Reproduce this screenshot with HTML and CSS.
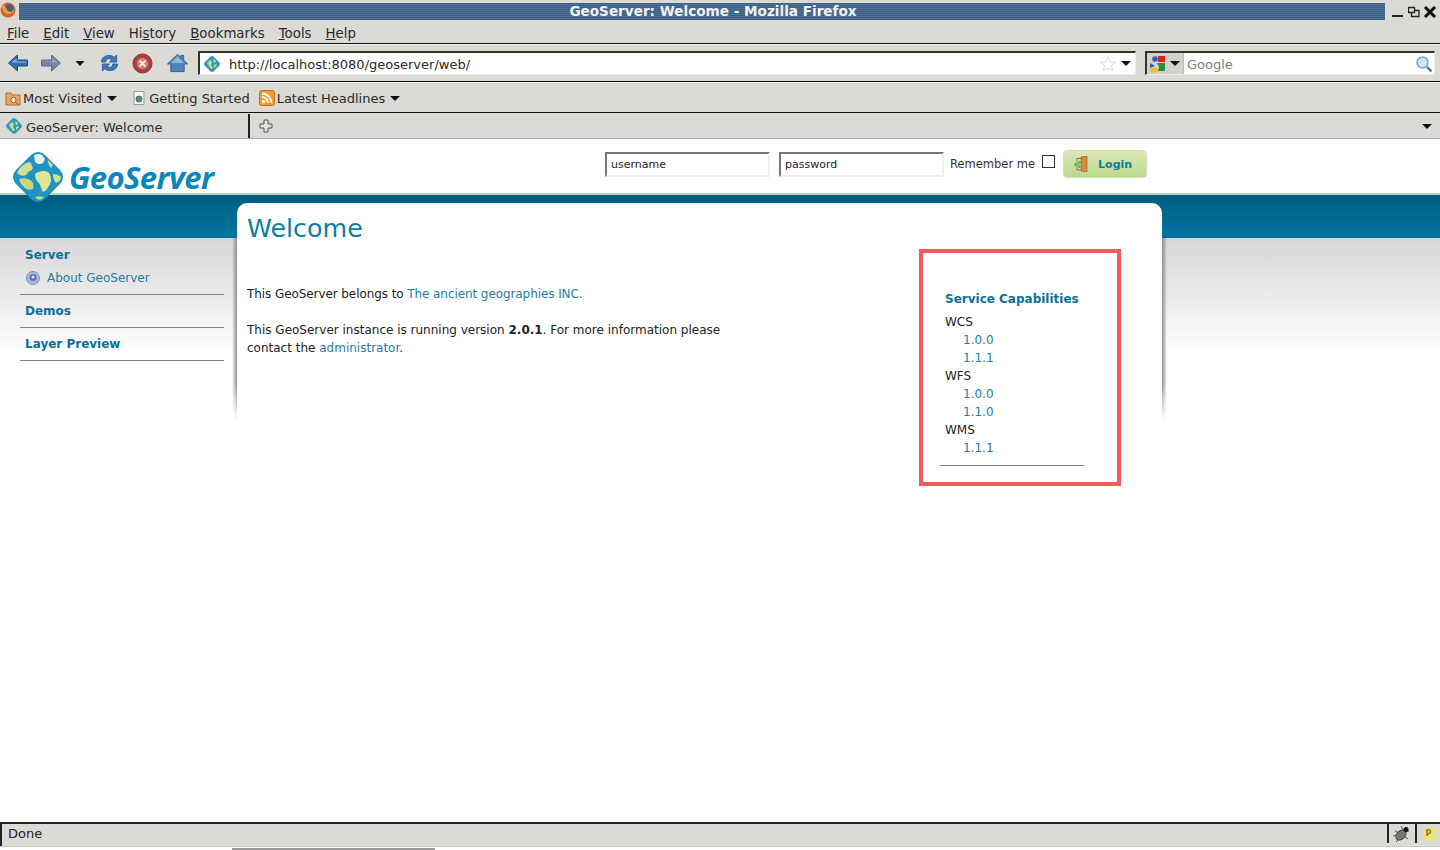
FILE: index.html
```html
<!DOCTYPE html>
<html lang="en">
<head>
<meta charset="utf-8">
<title>GeoServer: Welcome - Mozilla Firefox</title>
<link rel="stylesheet" href="styles.css">
</head>
<body>
<div class="browser">
  <div class="titlebar">
    <svg class="ff-icon" width="16" height="18" viewBox="0 0 16 18"><circle cx="8" cy="9" r="7.5" fill="#d9611f"/><circle cx="9" cy="7.5" r="4.2" fill="#3f5f96"/><path d="M2 4c0 6 3 10 8 9 3-.5 4-2 4.500-4-1 1.500-3 2-5 1.500C7 10 6 8.500 6.500 7 5 6.500 4 5 4 3z" fill="#f0a030"/></svg>
    <div class="titlebar-strip">GeoServer: Welcome - Mozilla Firefox</div>
    <div class="wm-buttons">
      <svg width="14" height="14" viewBox="0 0 14 14"><rect x="1" y="10" width="11" height="2" fill="#222"/></svg>
      <svg width="12" height="14" viewBox="0 0 12 14"><path d="M.5 2.500h6v5h-6z M3.500 7.500v4h7.500v-6H6.500" fill="none" stroke="#222" stroke-width="1.300"/></svg>
      <svg width="14" height="14" viewBox="0 0 14 14"><path d="M2 2l10 10M12 2L2 12" stroke="#111" stroke-width="3"/></svg>
    </div>
  </div>

  <nav class="menubar">
    <span class="menu-item"><u>F</u>ile</span>
    <span class="menu-item"><u>E</u>dit</span>
    <span class="menu-item"><u>V</u>iew</span>
    <span class="menu-item">Hi<u>s</u>tory</span>
    <span class="menu-item"><u>B</u>ookmarks</span>
    <span class="menu-item"><u>T</u>ools</span>
    <span class="menu-item"><u>H</u>elp</span>
  </nav>

  <div class="navbar">
    <div class="nav-buttons">
      <svg width="20" height="20" viewBox="0 0 20 20"><path d="M.5 10l9-8v5h10v6h-10v5z" fill="#2f6fb0" stroke="#1d4f85"/><path d="M3.500 9.500l5-4v3h10v1z" fill="#8fb8df"/></svg>
      <svg width="20" height="20" viewBox="0 0 20 20"><path d="M19.500 10l-9-8v5H.5v6h10v5z" fill="#75859f" stroke="#5f6f8a"/><path d="M1.500 8.500h10v-3l5 4z" fill="#a5b2c5"/></svg>
      <svg width="10" height="20" viewBox="0 0 10 20"><path d="M.5 8h9l-4.500 5z" fill="#111"/></svg>
      <svg width="19" height="20" viewBox="0 0 20 20"><path d="M1.500 9c0-4.500 3.500-7 8.500-7 2 0 4 1 5 2l2.500-2.500V9h-7.500l2.500-2.500C9.500 4.500 6 5.500 6 9z" fill="#3d78b8" stroke="#24558c" stroke-width=".8"/><path d="M18.500 11c0 4.500-3.500 7-8.500 7-2 0-4-1-5-2l-2.500 2.500V11h7.500l-2.500 2.500c2.500 2 6 1 6-2.500z" fill="#3d78b8" stroke="#24558c" stroke-width=".8"/></svg>
      <svg width="21" height="21" viewBox="0 0 22 22"><circle cx="11" cy="11" r="10" fill="#a93f3c" stroke="#8e3330"/><circle cx="11" cy="11" r="6" fill="#d07e79"/><path d="M8 8l6 6M14 8l-6 6" stroke="#f3f0ee" stroke-width="2"/></svg>
      <svg width="21" height="20" viewBox="0 0 22 20"><path d="M11 1L.5 11h3.500v8h14v-8h3.500l-4-4V2h-3v2z" fill="#4a85c0" stroke="#2f628f"/><path d="M11 3L4 10h14z" fill="#8db6dc"/></svg>
    </div>
    <div class="urlbar">
      <svg class="fav" width="16" height="16" viewBox="0 0 16 16"><path d="M8 0q1 0 2 1l5 5q2 2 0 4l-5 5q-2 2-4 0l-5-5q-2-2 0-4l5-5q1-1 2-1z" fill="#2f9bc4"/><path d="M3 7l3-3 2 2-1 3 2 3-2 1zM9 3l2 1 1 2-2 1zM10 9l2-1 1 1-3 3z" fill="#c9dc8c"/></svg>
      <span class="url-text">http://localhost:8080/geoserver/web/</span>
      <svg class="star" width="16" height="16" viewBox="0 0 18 18"><path d="M9 1l2.400 5.400 5.800.6-4.300 3.900 1.200 5.700L9 13.800l-5.100 2.800 1.200-5.700L.8 7l5.800-.6z" fill="#fff" stroke="#d5d5d0"/></svg>
      <i class="caret"></i>
    </div>
    <div class="searchbar">
      <div class="engine">
        <svg width="18" height="18" viewBox="0 0 18 18"><circle cx="6" cy="4" r="2.800" fill="#2a62b8"/><path d="M1 8l5 3-5 2z" fill="#2a62b8"/><ellipse cx="5" cy="15" rx="4" ry="2.600" fill="#f0bd2c"/><path d="M9 1h7v6H9z" fill="#d4261c"/><path d="M8 8h8v8H9l1-4z" fill="#2f8f3a"/></svg>
        <i class="caret"></i>
      </div>
      <span class="search-hint">Google</span>
      <svg class="magnifier" width="18" height="18" viewBox="0 0 18 18"><circle cx="7.500" cy="7.500" r="5.500" fill="#cfe3f5" stroke="#7fa6cf" stroke-width="1.500"/><path d="M12 12l4.500 4.500" stroke="#777" stroke-width="2.500"/></svg>
    </div>
  </div>

  <div class="bookmarks">
    <span class="bookmark bm-folder">
      <svg width="16" height="16" viewBox="0 0 16 16"><path d="M1 3h5l1 2h8v10H1z" fill="#e9a868" stroke="#b66a24"/><circle cx="8.500" cy="10" r="2.700" fill="#f8e7d0" stroke="#8a5a2a"/><path d="M10.500 12l2.500 2.500" stroke="#8a5a2a"/></svg>
      Most Visited <i class="caret"></i>
    </span>
    <span class="bookmark bm-page">
      <svg width="14" height="16" viewBox="0 0 14 16"><path d="M2 1.500h10v13H2z" fill="#f4f4f2" stroke="#999"/><circle cx="7" cy="9" r="3" fill="#5c8f85" stroke="#3e6a62"/></svg>
      Getting Started
    </span>
    <span class="bookmark">
      <svg width="16" height="16" viewBox="0 0 16 16"><rect x=".5" y=".5" width="15" height="15" rx="2" fill="#f49a2c" stroke="#c06f10"/><circle cx="4.500" cy="11.500" r="1.700" fill="#fff"/><path d="M3 7a6 6 0 0 1 6 6M3 3.500A9.500 9.500 0 0 1 12.500 13" fill="none" stroke="#fff" stroke-width="1.800"/></svg>
      Latest Headlines <i class="caret"></i>
    </span>
  </div>

  <div class="tabbar">
    <div class="tab">
      <svg width="16" height="16" viewBox="0 0 16 16"><path d="M8 0q1 0 2 1l5 5q2 2 0 4l-5 5q-2 2-4 0l-5-5q-2-2 0-4l5-5q1-1 2-1z" fill="#2f9bc4"/><path d="M3 7l3-3 2 2-1 3 2 3-2 1zM9 3l2 1 1 2-2 1zM10 9l2-1 1 1-3 3z" fill="#c9dc8c"/></svg>
      <span class="tab-label">GeoServer: Welcome</span>
    </div>
    <svg class="newtab" width="14" height="14" viewBox="0 0 14 14"><path d="M5 1h4v4h4v4H9v4H5V9H1V5h4z" fill="#e4e2de" stroke="#555"/></svg>
    <i class="caret tab-caret"></i>
  </div>

  <main class="page">
    <header class="page-head">
      <a class="logo">
        <svg class="logo-globe" width="52" height="52" viewBox="0 0 52 52"><path d="M26 1q4 0 7 3l15 15q6 7 0 14L33 48q-7 6-14 0L4 33q-6-7 0-14L19 4q3-3 7-3z" fill="#1f93c4"/><path d="M22 4q4-2 8 0l3 4-2 4c-3 2-6 1-8-1z" fill="#eaf2e4"/><path d="M5 22c2-5 6-9 12-11 3 1 3 4 4 6-1 3-5 3-6 6-3 3-6 2-10-1z" fill="#d2e08f"/><path d="M7 28c4-1 8-1 11 1 4 2 4 6 3 9-3 1-6 1-8-1-3-2-5-5-6-9z" fill="#c5d97c"/><path d="M23 23c4-3 9-4 13-2 3 3 4 8 2 12-2 4-4 7-7 8-2-3-2-6-4-9-3-2-4-6-4-9z" fill="#dbe69b"/><path d="M41 23c3 0 6 1 8 3 0 3-2 5-5 6-2-2-3-5-3-9z" fill="#d2e08f"/><path d="M23 46c3-1 6-1 9 0-2 3-6 4-9 0z" fill="#c5d97c"/><path d="M36 9l5 5-2 3c-2-2-3-5-3-8z" fill="#d2e08f"/></svg>
        <span class="logo-text">GeoServer</span>
      </a>
      <form class="login">
        <input class="field" type="text" value="username">
        <input class="field" type="text" value="password">
        <span class="remember">Remember me</span>
        <span class="check"></span>
        <span class="login-btn">
          <svg width="16" height="16" viewBox="0 0 16 16"><path d="M7 1l6-1v16l-6-1z" fill="#d98a3a" stroke="#99602a" stroke-width=".7"/><path d="M7 2.500H3v3M3 11v3h4" fill="none" stroke="#777"/><path d="M1 7h4V5l3.500 3.500L5 12v-2H1z" fill="#9bc36a" stroke="#5f8a3a" stroke-width=".7"/></svg>
          Login
        </span>
      </form>
    </header>

    <div class="layout">
      <aside class="sidebar">
        <section class="side-group">
          <h3 class="side-title">Server</h3>
          <a class="side-link">
            <svg width="14" height="14" viewBox="0 0 14 14"><circle cx="7" cy="7" r="6.500" fill="#a9b9dc" stroke="#7f92bd"/><circle cx="7" cy="6.500" r="3.500" fill="#5c75a8"/><circle cx="7" cy="6" r="1.500" fill="#e6ebf5"/></svg>
            About GeoServer
          </a>
        </section>
        <section class="side-group"><h3 class="side-title">Demos</h3></section>
        <section class="side-group"><h3 class="side-title">Layer Preview</h3></section>
      </aside>

      <article class="card">
        <div class="card-main">
          <h1 class="welcome">Welcome</h1>
          <p class="para">This GeoServer belongs to <a class="lnk">The ancient geographies INC.</a></p>
          <p class="para">This GeoServer instance is running version <b>2.0.1</b>. For more information please contact the <a class="lnk">administrator</a>.</p>
        </div>
        <div class="capabilities">
          <div class="cap-inner">
            <h3 class="cap-title">Service Capabilities</h3>
            <div class="cap-service">WCS</div>
            <a class="cap-version">1.0.0</a>
            <a class="cap-version">1.1.1</a>
            <div class="cap-service">WFS</div>
            <a class="cap-version">1.0.0</a>
            <a class="cap-version">1.1.0</a>
            <div class="cap-service">WMS</div>
            <a class="cap-version">1.1.1</a>
          </div>
        </div>
      </article>
    </div>
  </main>

  <footer class="statusbar">
    <span class="status-text">Done</span>
    <span class="status-cell">
      <svg width="20" height="20" viewBox="0 0 20 20"><g stroke="#555" stroke-width="1"><path d="M3 7l4 2M1 12l5-1M4 18l4-4M9 2l2 4M14 8l3-1M16 15l-4-3"/></g><ellipse cx="9" cy="11" rx="4" ry="6" transform="rotate(45 9 11)" fill="#777" stroke="#444"/><circle cx="14" cy="5.500" r="2.500" fill="#111"/></svg>
    </span>
    <span class="status-cell status-cell-p"><span class="p-badge">P</span></span>
  </footer>
  <div class="taskstrip"><span class="task-active"></span></div>
</div>
</body>
</html>
```

FILE: styles.css
```css
* { box-sizing: border-box; }
html, body { margin: 0; height: 100%; overflow: hidden; }
body { font-family: "DejaVu Sans", sans-serif; background: #fff; color: #222; }
svg { display: block; flex: none; }

.browser { width: 1440px; height: 850px; display: flex; flex-direction: column; }
.caret { display: inline-block; width: 0; height: 0; border-left: 5px solid transparent; border-right: 5px solid transparent; border-top: 5px solid #111; flex: none; }

.titlebar { height: 22px; background: #dcdad5; display: flex; align-items: center; gap: 3px; padding-top: 1px; }
.ff-icon { margin-top: -4px; }
.titlebar-strip { width: 1366px; height: 17px; margin-top: -1px; padding-left: 22px; background: repeating-linear-gradient(#3f6186 0 1px, #4c6f96 1px 2px); color: #f2f2f2; font-size: 13.600px; font-weight: bold; text-align: center; line-height: 16px; }
.wm-buttons { display: flex; gap: 3px; padding-left: 3px; }

.menubar { height: 22px; background: #dcdad5; display: flex; align-items: center; gap: 14px; padding: 1px 0 0 7px; font-size: 13.330px; color: #2a2a2a; border-bottom: 1px solid #111; }
.menu-item { white-space: nowrap; }

.navbar { height: 38px; background: #dcdad5; border-top: 1px solid #f4f3f0; border-bottom: 1px solid #111; display: flex; align-items: center; padding: 0 5px 0 8px; }
.nav-buttons { width: 190px; display: flex; align-items: center; gap: 13px; }
.nav-buttons svg:nth-child(3) { margin-left: 1px; margin-right: 2px; }
.nav-buttons svg:nth-child(6) { margin-left: 1px; }
.urlbar { width: 938px; height: 24px; background: #fff; border: 1px solid #eeece8; border-top: 2px solid #333; border-left: 2px solid #333; display: flex; align-items: center; font-size: 13px; padding: 0 4px; color: #2a2a2a; }
.fav { margin-right: 9px; }
.url-text { flex: 1; padding-top: 1px; }
.star { margin-right: 5px; }
.searchbar { width: 290px; height: 24px; margin-left: 9px; background: #fff; border: 1px solid #eeece8; border-top: 2px solid #333; border-left: 2px solid #333; display: flex; align-items: center; font-size: 13px; color: #808080; }
.engine { width: 37px; height: 100%; background: #d4d2cd; display: flex; align-items: center; gap: 3px; padding-left: 2px; border-right: 1px solid #bbb; }
.search-hint { flex: 1; padding: 1px 0 0 3px; }
.magnifier { margin-right: 1px; }

.bookmarks { height: 31px; background: #dcdad5; border-top: 1px solid #f4f3f0; border-bottom: 1px solid #111; display: flex; align-items: center; padding: 1px 0 0 5px; font-size: 13px; color: #2a2a2a; }
.bookmark { display: flex; align-items: center; gap: 2px; white-space: nowrap; }
.bookmark .caret { margin-left: 3px; }
.bm-folder { margin-right: 15px; }
.bm-page { margin-right: 9px; gap: 3px; }

.tabbar { height: 26px; padding-top: 1px; background: #dcdad5; border-bottom: 1px solid #aaa; display: flex; align-items: center; font-size: 13px; color: #2a2a2a; }
.tab { width: 250px; height: 100%; border-right: 2px solid #222; display: flex; align-items: center; gap: 4px; padding-left: 6px; }
.tab-label { padding-top: 2px; }
.newtab { margin-left: 9px; }
.tab-caret { margin-left: auto; margin-right: 8px; }

.page { flex: 1; min-height: 0; background: linear-gradient(#fff 0 54px, #b4d5b8 54px 56px, #005c7c 56px, #0076a3 98px, #005f83 99px, #d7d7d7 99px, #fff 215px); display: flex; flex-direction: column; }
.page-head { height: 56px; display: flex; position: relative; }
.logo { width: 605px; display: flex; padding: 12px 0 0 12px; gap: 5px; position: relative; z-index: 1; }
.logo-globe { height: 52px; }
.logo-text { font-family: "Open Sans", sans-serif; font-style: italic; font-weight: 700; font-size: 31px; color: #0b86ba; letter-spacing: -.6px; line-height: 52px; }
.login { display: flex; align-items: flex-start; padding-top: 13px; color: #333; }
.field { width: 165px; height: 25px; margin: 0 9px 0 0; padding: 0 4px; border: 2px solid #efefef; border-top-color: #777; border-left-color: #777; font: 11px "DejaVu Sans", sans-serif; color: #222; background: #fff; }
.remember { margin: 5px 7px 0 -3px; font-size: 11.500px; line-height: 15px; }
.check { width: 13px; height: 13px; border: 1px solid #333; margin: 3px 8px 0 0; background: #fff; }
.login-btn { width: 84px; height: 28px; border-radius: 4px; background: linear-gradient(#dbe8b5, #bcd88d); border: 1px solid #d3e0ad; display: flex; align-items: center; gap: 8px; padding-left: 10px; font-size: 11px; font-weight: bold; color: #0c7d9f; margin-top: -2px; }

.layout { display: flex; padding: 8px 0 0 20px; align-items: flex-start; }
.sidebar { width: 204px; margin-top: 43px; }
.side-group { border-bottom: 1px solid #87857a; padding: 1px 5px 0; margin-bottom: 7px; height: 26px; }
.side-group:first-child { height: 49px; }
.side-title { margin: 0; font-size: 12px; line-height: 17px; color: #0c7096; }
.side-link { display: flex; align-items: center; gap: 7px; margin-top: 6px; line-height: 17px; color: #1f7ca3; font-size: 12px; }
.side-link svg { margin-left: 1px; margin-top: -2px; }

.card { position: relative; margin-left: 13px; width: 925px; height: 217px; background: #fff; border-radius: 10px 10px 0 0; display: flex; justify-content: space-between; }
.card::before, .card::after { content: ""; position: absolute; top: 35px; bottom: 0; width: 5px; background: linear-gradient(to left, #8c8c8c, rgba(180,180,180,0)); -webkit-mask-image: linear-gradient(#000 80%, transparent); mask-image: linear-gradient(#000 80%, transparent); }
.card::before { left: -5px; }
.card::after { right: -5px; transform: scaleX(-1); }
.card-main { width: 500px; padding-left: 10px; }
.welcome { margin: 10px 0 0; font-size: 25.300px; font-weight: normal; line-height: 32px; color: #0b7fa8; }
.para { margin: 0 0 18px; font-size: 12px; line-height: 18px; color: #222; }
.welcome + .para { margin-top: 40px; letter-spacing: -.08px; }
.para b { font-weight: bold; }
.lnk { color: #1f7ca3; }

.capabilities { width: 202px; height: 237px; margin: 46px 41px 0 0; border: 4px solid #f15b5b; padding: 0 0 0 17px; flex: none; position: relative; z-index: 1; background: #fff; }
.cap-inner { width: 144px; height: 213px; padding: 37px 0 0 5px; border-bottom: 1px solid #87857a; font-size: 12px; line-height: 18px; }
.cap-title { margin: 0 0 5px; font-size: 12px; line-height: 18px; color: #0c7096; white-space: nowrap; }
.cap-service { color: #222; }
.cap-version { display: block; padding-left: 18px; color: #1f7ca3; }

.statusbar { height: 24px; padding-bottom: 3px; background: #dcdad5; border-top: 2px solid #222; border-left: 2px solid #222; display: flex; align-items: center; font-size: 13px; color: #222; }
.status-text { flex: 1; padding-left: 6px; }
.status-cell { width: 28px; height: 100%; border-left: 2px solid #222; display: flex; align-items: center; justify-content: center; }
.status-cell-p { width: 25px; }
.p-badge { width: 12px; height: 12px; background: #f0e46a; font-size: 8px; font-weight: bold; line-height: 12px; text-align: center; color: #775; }

.taskstrip { height: 4px; background: #fff; border-top: 1px solid #ccc; }
.task-active { display: block; height: 2px; width: 203px; margin: 1px 0 0 232px; background: #999; }
```
